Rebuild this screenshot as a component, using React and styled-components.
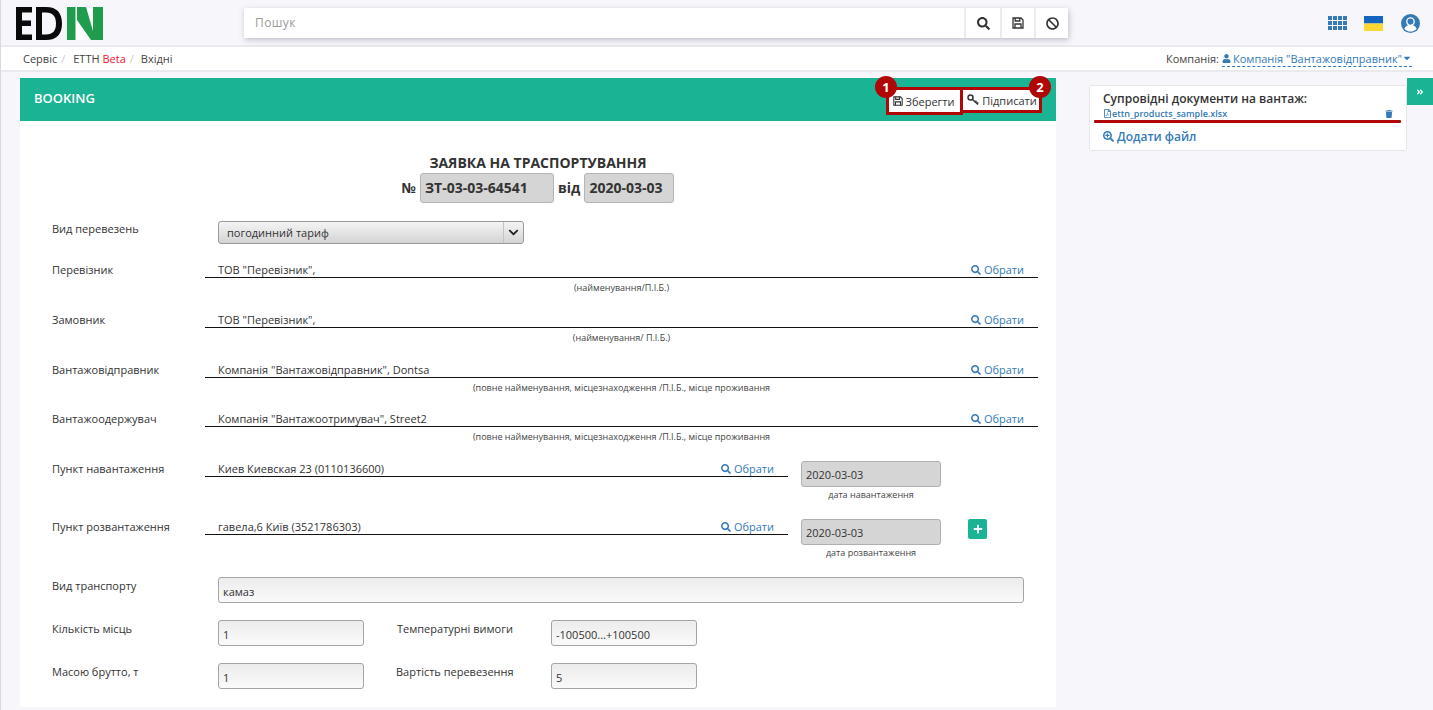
import React from 'react';
import styled, { createGlobalStyle } from 'styled-components';
import {
  FaSearch,
  FaBan,
  FaUser,
  FaTrash,
  FaRegFilePdf,
  FaSearchPlus,
  FaPlus,
  FaAngleDoubleRight,
  FaCaretDown,
  FaChevronDown,
} from 'react-icons/fa';

const GlobalStyle = createGlobalStyle`
  html, body {
    margin: 0;
    padding: 0;
    height: 100%;
    overflow: hidden;
    background: #f7f7fb;
  }
  * { box-sizing: border-box; }
  body {
    font-family: "Open Sans", "Noto Sans", sans-serif;
    font-size: 11px;
    color: #333;
  }
`;

const Page = styled.div`
  width: 1433px;
  height: 710px;
  overflow: hidden;
  border-left: 1px solid #d9d9de;
`;

const TopBar = styled.header`
  height: 47px;
  display: flex;
  align-items: center;
  border-bottom: 2px solid #e9e9ee;
  padding: 0 13px 0 14px;
`;

const LogoBox = styled.div`
  width: 229px;
  height: 33px;
  flex: none;
  margin-top: 1px;
`;

const SearchGroup = styled.div`
  display: flex;
  height: 30px;
  width: 824px;
  margin-top: 1px;
  background: #fff;
  box-shadow: 1px 2px 6px rgba(60, 60, 90, 0.3);
`;

const SearchInput = styled.div`
  flex: 1;
  padding: 0 0 2px 11px;
  display: flex;
  align-items: center;
  font-size: 12px;
  letter-spacing: 0.4px;
  color: #9a9a9a;
`;

const SearchButton = styled.div`
  width: ${(p) => p.$w}px;
  border-left: 2px solid #ececec;
  display: flex;
  align-items: center;
  justify-content: center;
  color: #333;
  font-size: 13px;
`;

const TopIcons = styled.div`
  margin-left: auto;
  display: flex;
  align-items: center;
  gap: 17px;
  margin-top: 1px;
  color: #337ab7;
  svg:last-child { margin-left: 1px; }
`;

const Crumbs = styled.nav`
  height: 25px;
  background: #fff;
  border-bottom: 2px solid #e9e9ee;
  display: flex;
  align-items: center;
  padding: 0 21px 0 22px;
  color: #444;
`;

const Sep = styled.span`
  color: #ccc;
  margin: 0 ${(p) => p.$after || 8}px 0 4px;
`;

const Beta = styled.span`
  color: #f0142f;
`;

const Company = styled.div`
  margin-left: auto;
  display: flex;
  align-items: center;
  gap: 3px;
`;

const CompanyLink = styled.span`
  color: #337ab7;
  border-bottom: 1px dashed #337ab7;
  display: inline-flex;
  align-items: center;
  gap: 2px;
  height: 17px;
  svg:last-child { margin-left: -2px; }
`;

const Main = styled.main`
  display: flex;
  align-items: flex-start;
  padding: 6px 0 0 19px;
`;

const Panel = styled.section`
  width: 1036px;
  height: 629px;
  background: #fff;
  flex: none;
`;

const PanelHead = styled.div`
  height: 43px;
  background: #1ab394;
  color: #fff;
  display: flex;
  align-items: center;
  padding: 0 17px 0 14px;
`;

const PanelTitle = styled.div`
  font-size: 13px;
  font-weight: 600;
  margin-bottom: 3px;
`;

const Actions = styled.div`
  margin-left: auto;
  align-self: flex-start;
  margin-top: 12px;
  display: flex;
  align-items: flex-start;
  gap: 3px;
`;

const ActionBtn = styled.div`
  width: ${(p) => p.$w}px;
  height: ${(p) => p.$h}px;
  padding: ${(p) => p.$pad};
  background: #fff;
  color: #333;
  display: flex;
  align-items: center;
  justify-content: center;
  gap: 3px;
  position: relative;
  outline: 3px solid #b00606;
`;

const Badge = styled.span`
  position: absolute;
  width: 22px;
  height: 22px;
  border-radius: 50%;
  background: #b00606;
  color: #fff;
  font-weight: 700;
  font-size: 13px;
  display: flex;
  align-items: center;
  justify-content: center;
  top: -14px;
  ${(p) => (p.$side === 'left' ? 'left: -14px;' : 'right: -12px;')}
`;

const Form = styled.div`
  padding: 32px 18px 0 32px;
`;

const DocHead = styled.div`
  display: flex;
  flex-direction: column;
  align-items: center;
  font-size: 14px;
  font-weight: 700;
  color: #333;
  margin-left: -14px;
  line-height: 20px;
`;

const NumberRow = styled.div`
  display: flex;
  align-items: center;
  gap: 4px;
  height: 30px;
`;

const DocInput = styled.div`
  width: ${(p) => p.$w}px;
  height: 30px;
  background: #d5d5d5;
  border: 1px solid #b5b5b5;
  border-radius: 3px;
  padding-left: 4px;
  display: flex;
  align-items: center;
`;

const Row = styled.div`
  display: flex;
  margin-top: ${(p) => p.$top}px;
`;

const Label = styled.div`
  width: ${(p) => p.$w || 153}px;
  flex: none;
  line-height: 16px;
  padding-top: ${(p) => p.$pt || 0}px;
  padding-left: ${(p) => p.$pl || 0}px;
`;

const SelectBox = styled.div`
  width: 306px;
  height: 23px;
  margin: 0 0 0 13px;
  border: 1px solid #999;
  border-radius: 3px;
  background: linear-gradient(#f4f4f4, #d4d4d4);
  display: flex;
  align-items: center;
  padding-left: 8px;
`;

const SelectArrow = styled.span`
  margin-left: auto;
  width: 20px;
  height: 100%;
  border-left: 1px solid #c4c4c4;
  display: flex;
  align-items: center;
  justify-content: center;
  color: #222;
  font-size: 11px;
`;

const FieldColumn = styled.div`
  width: ${(p) => p.$w || 833}px;
  flex: none;
`;

const LineField = styled.div`
  height: 16px;
  border-bottom: 1px solid #111;
  display: flex;
  justify-content: space-between;
  padding: 0 14px 0 13px;
  line-height: 16px;
`;

const Pick = styled.span`
  color: #337ab7;
  display: inline-flex;
  align-items: center;
  gap: 3px;
  height: 15px;
  svg { font-size: 10px; }
`;

const Hint = styled.div`
  text-align: center;
  font-size: 9px;
  line-height: 12px;
  margin-top: ${(p) => p.$mt || 4}px;
  color: #444;
`;

const DateColumn = styled.div`
  width: 140px;
  margin-left: 13px;
  flex: none;
`;

const DateInput = styled.div`
  height: 26px;
  background: #d5d5d5;
  border: 1px solid #b0b0b0;
  border-radius: 3px;
  padding-left: 4px;
  display: flex;
  align-items: center;
`;

const PlusBtn = styled.div`
  width: 19px;
  height: 20px;
  background: #1ab394;
  border-radius: 2px;
  margin-left: 27px;
  color: #fff;
  font-size: 10px;
  display: flex;
  align-items: center;
  justify-content: center;
`;

const TextBox = styled.div`
  width: ${(p) => p.$w}px;
  height: 26px;
  border: 1px solid #a5a5a5;
  border-radius: 3px;
  background: linear-gradient(#ececec, #fafafa);
  padding: 2px 0 0 4px;
  display: flex;
  align-items: center;
  flex: none;
`;

const Side = styled.aside`
  width: 318px;
  margin: 7px 0 0 33px;
  height: 66px;
  background: #fff;
  border: 1px solid #e6e6ea;
  border-radius: 3px;
  padding: 6px 13px;
  position: relative;
  flex: none;
`;

const SideTitle = styled.div`
  font-size: 12px;
  font-weight: 600;
  line-height: 14px;
`;

const FileRow = styled.div`
  display: flex;
  align-items: center;
  color: #337ab7;
  font-size: 9px;
  font-weight: 600;
  height: 13px;
  margin-top: 1px;
`;

const Trash = styled.span`
  margin-left: auto;
  font-size: 8px;
  display: flex;
`;

const RedLine = styled.div`
  position: absolute;
  left: 4px;
  right: 5px;
  top: 34px;
  height: 3px;
  background: #b00606;
  border-radius: 1px;
`;

const AddFile = styled.div`
  margin-top: 8px;
  color: #337ab7;
  font-size: 12px;
  font-weight: 600;
  display: flex;
  align-items: center;
  gap: 3px;
`;

const Toggle = styled.div`
  width: 26px;
  height: 27px;
  background: #1ab394;
  color: #fff;
  font-size: 8px;
  display: flex;
  align-items: center;
  justify-content: center;
  flex: none;
`;

const Logo = () => (
  <svg width="89" height="33" viewBox="0 0 89 33">
    <path d="M1 0h16v5.500H7v8h9v5.500H7v8.500h10V33H1z" fill="#0a0a0a" />
    <path d="M21 0h10c11 0 16 6 16 16.500S42 33 31 33H21zM27 5.500v22h4c7 0 10-4 10-11s-3-11-10-11z" fill="#0a0a0a" fillRule="evenodd" />
    <rect x="52" width="36" height="33" fill="#1f9d4d" />
    <path d="M60.500 0h1.500v33h-1.500zM62 13l14 20H62zM71 0h7v24z" fill="#fff" />
  </svg>
);

const Flag = () => (
  <svg width="19" height="15" viewBox="0 0 19 15">
    <rect width="19" height="7.500" fill="#1565c0" />
    <rect y="7.500" width="19" height="7.500" fill="#fdd835" />
  </svg>
);

const AppsGrid = () => (
  <svg width="19" height="14" viewBox="0 0 19 14" fill="#337ab7">
    {[0, 5, 10].map((y) =>
      [0, 5, 10, 15].map((x) => <rect key={`${x}-${y}`} x={x} y={y} width="4" height="4" />)
    )}
  </svg>
);

const Avatar = () => (
  <svg width="19" height="19" viewBox="0 0 20 20">
    <circle cx="10" cy="10" r="10" fill="#337ab7" />
    <path d="M3.500 15.500c1.200-3 3.500-4 6.500-4s5.300 1 6.500 4c-1.600 1.900-3.900 3-6.500 3s-4.900-1.100-6.500-3z" fill="#fff" />
    <circle cx="10" cy="8" r="3.900" fill="#337ab7" stroke="#fff" strokeWidth="1.400" />
  </svg>
);

const SaveIcon = ({ size }) => (
  <svg width={size} height={size} viewBox="0 0 12 12" fill="none" stroke="currentColor" strokeWidth="1.300">
    <path d="M1 1h8l2 2v8H1z" />
    <path d="M3.200 1v3h4.600V1M3 11V7h6v4" />
  </svg>
);

const KeyIcon = () => (
  <svg width="12" height="12" viewBox="0 0 12 12" fill="none" stroke="#333" strokeWidth="1.500">
    <circle cx="3.500" cy="3.500" r="2.500" />
    <path d="M5.500 5.500l5.500 5M8 8l1.500-1.300M9.800 9.700l1.300-1.300" />
  </svg>
);

const Party = ({ top, label, value, hint }) => (
  <Row $top={top}>
    <Label>{label}</Label>
    <FieldColumn>
      <LineField>
        <span>{value}</span>
        <Pick><FaSearch />Обрати</Pick>
      </LineField>
      <Hint>{hint}</Hint>
    </FieldColumn>
  </Row>
);

const Point = ({ top, label, value, hint, plus }) => (
  <Row $top={top}>
    <Label>{label}</Label>
    <FieldColumn $w={583}>
      <LineField>
        <span>{value}</span>
        <Pick><FaSearch />Обрати</Pick>
      </LineField>
    </FieldColumn>
    <DateColumn>
      <DateInput>2020-03-03</DateInput>
      <Hint $mt={2}>{hint}</Hint>
    </DateColumn>
    {plus && <PlusBtn><FaPlus /></PlusBtn>}
  </Row>
);

const PARTIES = [
  { top: 18, label: 'Перевізник', value: 'ТОВ "Перевізник",', hint: '(найменування/П.І.Б.)' },
  { top: 18, label: 'Замовник', value: 'ТОВ "Перевізник",', hint: '(найменування/ П.І.Б.)' },
  { top: 18, label: 'Вантажовідправник', value: 'Компанія "Вантажовідправник", Dontsa', hint: '(повне найменування, місцезнаходження /П.І.Б., місце проживання' },
  { top: 17, label: 'Вантажоодержувач', value: 'Компанія "Вантажоотримувач", Street2', hint: '(повне найменування, місцезнаходження /П.І.Б., місце проживання' },
];

export default function App() {
  return (
    <Page>
      <GlobalStyle />
      <TopBar>
        <LogoBox><Logo /></LogoBox>
        <SearchGroup>
          <SearchInput>Пошук</SearchInput>
          <SearchButton $w={36}><FaSearch /></SearchButton>
          <SearchButton $w={34}><SaveIcon size={12} /></SearchButton>
          <SearchButton $w={34}><FaBan /></SearchButton>
        </SearchGroup>
        <TopIcons>
          <AppsGrid />
          <Flag />
          <Avatar />
        </TopIcons>
      </TopBar>
      <Crumbs>
        Сервіс<Sep>/</Sep>ЕТТН&nbsp;<Beta>Beta</Beta><Sep $after={7}>/</Sep>Вхідні
        <Company>
          Компанія:
          <CompanyLink>
            <FaUser size={9} />
            Компанія "Вантажовідправник"
            <FaCaretDown size={10} />
          </CompanyLink>
        </Company>
      </Crumbs>
      <Main>
        <Panel>
          <PanelHead>
            <PanelTitle>BOOKING</PanelTitle>
            <Actions>
              <ActionBtn $w={71} $h={22} $pad="0 2px 0 0">
                <Badge $side="left">1</Badge>
                <SaveIcon size={10} />Зберегти
              </ActionBtn>
              <ActionBtn $w={76} $h={20} $pad="0 0 0 2px">
                <Badge $side="right">2</Badge>
                <KeyIcon />Підписати
              </ActionBtn>
            </Actions>
          </PanelHead>
          <Form>
            <DocHead>
              ЗАЯВКА НА ТРАСПОРТУВАННЯ
              <NumberRow>
                № <DocInput $w={134}>ЗТ-03-03-64541</DocInput>
                від <DocInput $w={90}>2020-03-03</DocInput>
              </NumberRow>
            </DocHead>
            <Row $top={18}>
              <Label>Вид перевезень</Label>
              <SelectBox>
                погодинний тариф
                <SelectArrow><FaChevronDown /></SelectArrow>
              </SelectBox>
            </Row>
            {PARTIES.map((p) => (
              <Party key={p.label} {...p} />
            ))}
            <Point top={18} label="Пункт навантаження" value="Киев Киевская 23 (0110136600)" hint="дата навантаження" />
            <Point top={18} label="Пункт розвантаження" value="гавела,6 Київ (3521786303)" hint="дата розвантаження" plus />
            <Row $top={18}>
              <Label $w={166} $pt={1}>Вид транспорту</Label>
              <TextBox $w={806}>камаз</TextBox>
            </Row>
            <Row $top={17}>
              <Label $w={166} $pt={1}>Кількість місць</Label>
              <TextBox $w={146}>1</TextBox>
              <Label $w={187} $pl={33} $pt={1}>Температурні вимоги</Label>
              <TextBox $w={146}>-100500...+100500</TextBox>
            </Row>
            <Row $top={17}>
              <Label $w={166} $pt={1}>Масою брутто, т</Label>
              <TextBox $w={146}>1</TextBox>
              <Label $w={187} $pl={32} $pt={1}>Вартість перевезення</Label>
              <TextBox $w={146}>5</TextBox>
            </Row>
          </Form>
        </Panel>
        <Side>
          <SideTitle>Супровідні документи на вантаж:</SideTitle>
          <FileRow>
            <FaRegFilePdf size={9} />ettn_products_sample.xlsx
            <Trash><FaTrash /></Trash>
          </FileRow>
          <RedLine />
          <AddFile><FaSearchPlus size={11} />Додати файл</AddFile>
        </Side>
        <Toggle><FaAngleDoubleRight /></Toggle>
      </Main>
    </Page>
  );
}
